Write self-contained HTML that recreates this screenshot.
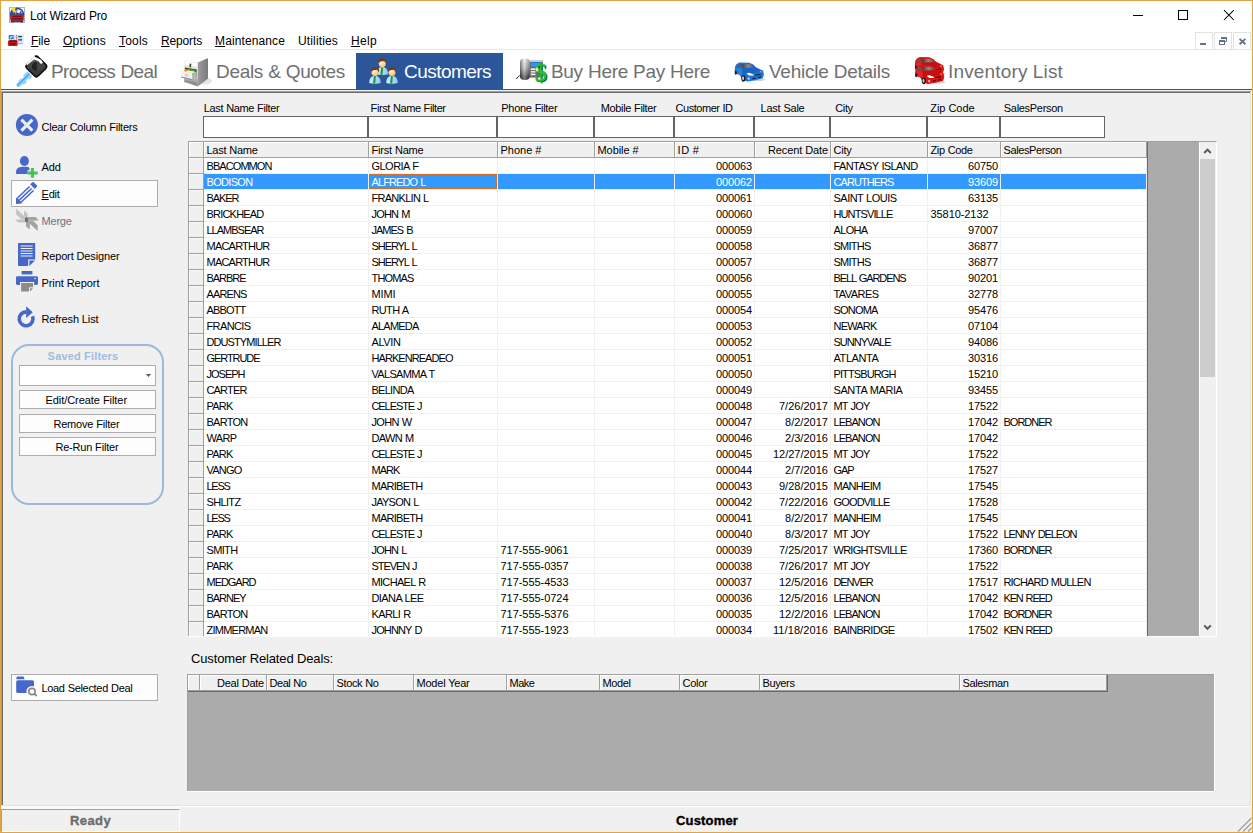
<!DOCTYPE html>
<html><head><meta charset="utf-8"><title>Lot Wizard Pro</title>
<style>
*{box-sizing:border-box;margin:0;padding:0}
html,body{width:1253px;height:833px;overflow:hidden;background:#fff}
body{font-family:"Liberation Sans",sans-serif;font-size:11px;color:#000;position:relative}
#win{position:absolute;left:0;top:0;width:1253px;height:833px;background:#fff;overflow:hidden}
#win *{position:absolute}
#win .t{white-space:nowrap;line-height:1}
#win .t u{position:static;text-decoration:underline}
#client{left:1px;top:90px;width:1251px;height:715px;background:#f0f0f0}
.inp{top:116px;height:22px;background:#fff;border:1px solid #646464}
.btn{background:#fdfdfd;border:1px solid #adadad}
#grid{left:188px;top:141px;width:1029px;height:496px;background:#ababab;border-top:1px solid #a0a0a0;border-left:1px solid #a0a0a0;border-right:1px solid #fff;border-bottom:1px solid #fff}
.hdr{top:142px;height:16px;background:#f0f0f0;border-right:1px solid #a0a0a0;border-bottom:1px solid #a0a0a0;box-shadow:inset 1px 1px 0 #fff;font-size:11px;line-height:14px;padding-top:1px;padding-left:2.5px;white-space:nowrap;overflow:hidden}
.row{left:189px;width:958px;height:16px;background:#fff}
.row .rh{left:0;top:0;width:15px;height:16px;background:#f0f0f0;border-right:1px solid #a0a0a0;border-bottom:1px solid #a0a0a0;box-shadow:inset 1px 1px 0 #fafafa}
.row .c{top:0;height:16px;line-height:16px;font-size:11px;white-space:nowrap;overflow:hidden;border-right:1px solid #f0f0f0;border-bottom:1px solid #f0f0f0;padding:0 2px 0 2.5px}
.row .r{text-align:right}
.row.sel .c{background:#3399ff;color:#fff}
</style></head><body><div id="win">
<!-- title bar -->
<div class="t" style="left:30px;top:10px;font-size:12px;letter-spacing:-0.186px;word-spacing:0.125px;">Lot Wizard Pro</div>
<svg style="left:1128px;top:6px" width="120" height="20" viewBox="0 0 120 20">
<path d="M5 9.5 H15" stroke="#000" stroke-width="1" fill="none"/>
<rect x="50.5" y="4.5" width="9" height="9" stroke="#000" stroke-width="1" fill="none"/>
<path d="M96 4.2 L105.8 14 M105.8 4.2 L96 14" stroke="#000" stroke-width="1.05" fill="none"/>
</svg>
<!-- menu -->
<div class="t" style="left:31px;top:35px;font-size:12px;letter-spacing:-0.084px;"><u>F</u>ile</div>
<div class="t" style="left:63px;top:35px;font-size:12px;letter-spacing:0.235px;"><u>O</u>ptions</div>
<div class="t" style="left:119px;top:35px;font-size:12px;letter-spacing:0.198px;"><u>T</u>ools</div>
<div class="t" style="left:161px;top:35px;font-size:12px;letter-spacing:-0.145px;"><u>R</u>eports</div>
<div class="t" style="left:215px;top:35px;font-size:12px;letter-spacing:0.117px;"><u>M</u>aintenance</div>
<div class="t" style="left:298px;top:35px;font-size:12px;letter-spacing:0.148px;">Utilities</div>
<div class="t" style="left:351px;top:35px;font-size:12px;letter-spacing:0.33px;"><u>H</u>elp</div>
<div style="left:1px;top:49px;width:1251px;height:1px;background:#e8e8e8"></div>
<!-- tabs -->
<div style="left:356px;top:53px;width:147px;height:36px;background:#2b579a"></div>
<div style="left:1px;top:89px;width:1251px;height:1px;background:#2b579a"></div>
<div class="t" style="left:51px;top:62px;font-size:19px;letter-spacing:-0.627px;word-spacing:0.53px;color:#707070;">Process Deal</div>
<div class="t" style="left:216px;top:62px;font-size:19px;letter-spacing:-0.323px;word-spacing:0.226px;color:#707070;">Deals &amp; Quotes</div>
<div class="t" style="left:404px;top:62px;font-size:19px;letter-spacing:-0.539px;color:#fff;">Customers</div>
<div class="t" style="left:551px;top:62px;font-size:19px;letter-spacing:-0.314px;word-spacing:0.217px;color:#707070;">Buy Here Pay Here</div>
<div class="t" style="left:769px;top:62px;font-size:19px;letter-spacing:-0.252px;word-spacing:0.156px;color:#707070;">Vehicle Details</div>
<div class="t" style="left:948px;top:62px;font-size:19px;letter-spacing:0.161px;word-spacing:-0.258px;color:#707070;">Inventory List</div>
<!-- client -->
<div id="client"></div>
<div style="left:1px;top:91px;width:1251px;height:1px;background:#a0a0a0"></div>
<div style="left:2px;top:92px;width:1250px;height:1px;background:#696969"></div>
<div style="left:1px;top:91px;width:1px;height:714px;background:#a0a0a0"></div>
<div style="left:2px;top:92px;width:1px;height:713px;background:#696969"></div>
<!-- left panel -->
<div class="btn" style="left:11px;top:180px;width:147px;height:27px"></div>
<div class="btn" style="left:11px;top:674px;width:147px;height:27px"></div>
<div class="t" style="left:41.5px;top:122px;font-size:11px;letter-spacing:-0.229px;word-spacing:0.173px;">Clear Column Filters</div>
<div class="t" style="left:41.6px;top:162px;font-size:11px;letter-spacing:-0.191px;">Add</div>
<div class="t" style="left:41.6px;top:189px;font-size:11px;letter-spacing:-0.239px;"><u>E</u>dit</div>
<div class="t" style="left:41.6px;top:216px;font-size:11px;letter-spacing:-0.235px;color:#6f6f80;">Merge</div>
<div class="t" style="left:41.4px;top:251px;font-size:11px;letter-spacing:-0.145px;word-spacing:0.089px;">Report Designer</div>
<div class="t" style="left:41.4px;top:278px;font-size:11px;letter-spacing:-0.057px;word-spacing:0.001px;">Print Report</div>
<div class="t" style="left:41.4px;top:314px;font-size:11px;letter-spacing:-0.148px;word-spacing:0.092px;">Refresh List</div>
<div class="t" style="left:41.4px;top:683px;font-size:11px;letter-spacing:-0.306px;word-spacing:0.25px;">Load Selected Deal</div>
<div style="left:11px;top:344px;width:153px;height:161px;border:2px solid #9cb8dc;border-radius:18px"></div>
<div class="t" style="left:47.6px;top:351px;font-size:11px;letter-spacing:0.199px;word-spacing:-0.255px;font-weight:bold;color:#a0bbdf;">Saved Filters</div>
<div class="btn" style="left:19px;top:365px;width:137px;height:21px;background:#fff"></div>
<svg style="left:144px;top:372px" width="9" height="6" viewBox="0 0 9 6"><path d="M1.8 2 H7.2 L4.5 5 Z" fill="#606060"/></svg>
<div class="btn" style="left:19px;top:390px;width:137px;height:19px"></div>
<div class="btn" style="left:19px;top:414px;width:137px;height:19px"></div>
<div class="btn" style="left:19px;top:437px;width:137px;height:19px"></div>
<div class="t" style="left:45.5px;top:395px;font-size:11px;letter-spacing:-0.057px;word-spacing:0.001px;">Edit/Create Filter</div>
<div class="t" style="left:53.4px;top:419px;font-size:11px;letter-spacing:-0.2px;word-spacing:0.144px;">Remove Filter</div>
<div class="t" style="left:55.4px;top:442px;font-size:11px;letter-spacing:-0.195px;word-spacing:0.139px;">Re-Run Filter</div>
<!-- app icon -->
<svg style="left:9px;top:7px" width="16" height="16" viewBox="0 0 16 16">
<rect x=".5" y=".5" width="15" height="15" fill="#fff" stroke="#b0b0b0" stroke-width="1"/>
<circle cx="8" cy="7.6" r="7.2" fill="#2c47ae"/>
<path d="M1.4 9 Q4 4.6 6 6 L4.6 10 Z" fill="#1c7a58" opacity=".7"/>
<path d="M2.2 .6 L6.8 .4 L5.8 3.6 L8 3.4 L6.6 8 L6.4 5.2 L4.2 5.6 Z" fill="#f6e21a"/>
<path d="M8.4 2 L12 3.2 L10.4 6.6 L8 5.4 Z" fill="#eef0fa"/>
<path d="M12 3.4 L13.8 5.4 L12 7 Z" fill="#8a96d8"/>
<path d="M1.2 10 Q2 7.6 4 7.8 L12 7.8 Q14 7.6 14.8 10 L14.8 13.6 L1.2 13.6 Z" fill="#d41a1a"/>
<path d="M3.4 8.8 H12.6 V10 H3.4 Z" fill="#7a1010"/>
<path d="M2.4 11.4 H13.6 V12.4 H2.4 Z" fill="#5a0c0c"/>
<rect x="1.8" y="13.4" width="3" height="1.8" fill="#222"/><rect x="11.2" y="13.4" width="3" height="1.8" fill="#222"/>
<path d="M4 14 H12 V15 H4 Z" fill="#b01414"/>
</svg>
<!-- menu icon -->
<svg style="left:8px;top:34px" width="16" height="13" viewBox="0 0 16 13">
<rect x=".4" y=".7" width="15.2" height="10" fill="#cfe4fa"/>
<rect x=".8" y="1" width="4.8" height="4.2" fill="#2a78e4"/>
<path d="M2 4.4 L2.6 2.4 L4.6 2 L4.6 3 L3.4 3.2 L3 4.6 Z" fill="#fff"/>
<rect x="8" y="1.2" width="1" height="1" fill="#e02020"/><rect x="8" y="3" width="1" height="1.4" fill="#e05050"/><rect x="8" y="5.6" width="1" height="1" fill="#e02020"/>
<path d="M10.2 2 h3.6 v1.2 h-3.6 z M10.2 5.2 h3.8 v1.4 h-3.8 z" fill="#333"/>
<path d="M10.2 9.2 h3.6 v.8 h-3.6 z" fill="#8aa"/>
<path d="M0 7 L1.6 6.2 H8.2 L9.6 7 V11 Q9.6 12 8.6 12 H1 Q0 12 0 11 Z" fill="#e01414"/>
<path d="M1.6 6.4 H8.4 L9 7.6 H1 Z" fill="#111"/>
<rect x="1.8" y="9.2" width="6" height="1.2" fill="#111"/>
</svg>
<!-- mdi child buttons -->
<div style="left:1195px;top:32px;width:18px;height:18px;border:1px solid #e2e2e2;background:#fff"></div>
<div style="left:1214px;top:32px;width:18px;height:18px;border:1px solid #e2e2e2;background:#fff"></div>
<div style="left:1233px;top:32px;width:18px;height:18px;border:1px solid #e2e2e2;background:#fff"></div>
<svg style="left:1195px;top:32px" width="57" height="18" viewBox="0 0 57 18">
<rect x="5" y="11" width="6" height="2" fill="#62738c"/>
<path d="M26.5 6 h5 v3.5 h-2" stroke="#62738c" stroke-width="1" fill="none"/>
<rect x="26" y="5" width="6" height="2" fill="#62738c"/>
<rect x="24.5" y="8.5" width="5" height="4" stroke="#62738c" stroke-width="1" fill="#fff"/>
<rect x="24" y="8" width="6" height="2" fill="#62738c"/>
<path d="M44.6 6.9 L50.4 12.3 M50.4 6.9 L44.6 12.3" stroke="#62738c" stroke-width="1.9" fill="none"/>
</svg>
<svg width="0" height="0" style="left:0;top:0"><defs>
<linearGradient id="kh" x1="0" y1="0" x2="1" y2="1"><stop offset="0" stop-color="#585858"/><stop offset="1" stop-color="#303030"/></linearGradient>
<linearGradient id="hs" x1="0" y1="0" x2="0" y2="1"><stop offset="0" stop-color="#f4f4f4"/><stop offset="0.45" stop-color="#b8b8b8"/><stop offset="1" stop-color="#1c1c1c"/></linearGradient>
<linearGradient id="hs2" x1="0" y1="0" x2="1" y2="0"><stop offset="0" stop-color="#000" stop-opacity=".45"/><stop offset="0.45" stop-color="#fff" stop-opacity=".35"/><stop offset="1" stop-color="#000" stop-opacity=".35"/></linearGradient>
<linearGradient id="cwin" x1="0" y1="0" x2="1" y2="0"><stop offset="0" stop-color="#3a3a3a"/><stop offset="0.5" stop-color="#8a8a8a"/><stop offset="1" stop-color="#4a4a4a"/></linearGradient>
<linearGradient id="cab" x1="0" y1="0" x2="0" y2="1"><stop offset="0" stop-color="#fafafa"/><stop offset="0.55" stop-color="#d0d0d0"/><stop offset="1" stop-color="#8a8a8a"/></linearGradient>
<linearGradient id="cabs" x1="0" y1="0" x2="1" y2="0"><stop offset="0" stop-color="#9c9c9c"/><stop offset="1" stop-color="#7a7a7a"/></linearGradient>
<radialGradient id="skin" cx=".4" cy=".4" r=".7"><stop offset="0" stop-color="#fff0dc"/><stop offset="1" stop-color="#f8b868"/></radialGradient>
<linearGradient id="shirt" x1="0" y1="0" x2="1" y2="0"><stop offset="0" stop-color="#d4eeff"/><stop offset="1" stop-color="#8cc8f8"/></linearGradient>
<g id="person">
<path d="M-5.7 11.2 C-5.9 6 -3 4 0 4 C3 4 5.9 6 5.7 11.2 C3 12.3 -3 12.3 -5.7 11.2 Z" fill="url(#shirt)"/>
<path d="M-1 4.2 L0.9 4.2 L0.2 11.9 L-2 11.8 Z" fill="#1f9a2f"/>
<ellipse cx="0" cy="0.3" rx="3.6" ry="4.1" fill="url(#skin)"/>
<path d="M-3.9 0.6 C-4.7 -4 -1.4 -5 0.6 -4.7 C3.4 -4.7 4.8 -2.4 3.9 1 C3.1 -0.6 2.7 -1.7 1.4 -1.9 C-0.4 -1.4 -2.7 -1.9 -3.9 0.6 Z" fill="#7a3a10"/>
</g>
<g id="car">
<ellipse cx="33" cy="29.6" rx="7" ry="1.6" fill="#cfcfcf"/>
<path d="M10.1 16.5 L11.6 14 L14.6 12.5 L24.2 12.7 L28.4 14.6 L30.6 17 L35.4 19.5 L38 20.6 L38.9 24.6 L37.8 28.2 L30.2 30.3 L22.7 31.4 L20.6 31 L16.3 27.4 L15 25.3 L10.8 23.6 L9.6 21.2 Z" fill="currentColor"/>
<path d="M17.4 18.2 L30.4 17.6 L35.4 19.6 L37.6 21.2 L30 23 L22 23.6 L18 24 Z" fill="#000" opacity=".12"/>
<path d="M16.4 14.3 L25.8 14.3 L30.3 17.5 L17.4 18 Z" fill="url(#cwin)"/>
<path d="M12.8 14.7 L15.5 14.3 L16.2 17.7 L11.8 17.4 Z" fill="#5a5a5a"/>
<path d="M11.2 17.8 L16.4 18.3 L17.2 26 L15.6 25 L11 23.2 Z" fill="#fff" opacity=".08"/>
<ellipse cx="18.4" cy="28.3" rx="2.1" ry="3.4" fill="#1a1a1a"/>
<ellipse cx="18.1" cy="28.3" rx="1" ry="2" fill="#c8c8c8"/>
<ellipse cx="10.8" cy="22.8" rx="1.1" ry="2" fill="#1a1a1a"/>
<path d="M21.4 23.2 L24 22.8 L28.6 24.6 L28.4 25.6 L24 25.4 Z" fill="#fff"/>
<path d="M30 24.6 L35.6 23.8 L35.8 24.8 L30.4 25.6 Z" fill="#111"/>
<path d="M27.4 28.2 L30.6 27.6 L30.8 28.6 L27.6 29.2 Z M33 27 L35.8 26.2 L35.8 27.4 L33.2 28 Z" fill="#111"/>
<path d="M22.6 27.8 L24.6 27.4 L24.8 29.4 L23 29.8 Z" fill="#fff" opacity=".75"/>
<path d="M34.4 20.4 L36.6 21.2 L36 23 Z" fill="#fff" opacity=".55"/>
</g>
</defs></svg>
<!-- Process Deal: key -->
<svg style="left:10px;top:50px" width="50" height="42" viewBox="0 0 50 42">
<path d="M17.5 21.2 L22.5 26.2 L19.6 29.3 L18.2 28.6 L16 31 L16.8 32.6 L13.4 34.8 L12.4 33.8 L10.6 36.2 L7.6 37 L6.2 35.6 L6.6 33.4 L9 31.6 L8.6 30.4 L11.4 28.2 L12.2 28.8 L14 26.8 L13.2 25.4 Z" fill="#8ed2ff"/>
<path d="M7.4 35.6 L19.4 23.6" stroke="#3a9cf4" stroke-width="1.1" fill="none"/>
<rect x="-8.1" y="-8.1" width="16.2" height="16.2" rx="3" transform="translate(26.3 16.5) rotate(45)" fill="url(#kh)" stroke="#0c0c0c" stroke-width="1.5"/>
<path d="M24 6.6 L31 9.8 L33 12.8 L30.6 14.2 L28.6 11.2 L24.2 9.4 L20.6 12.2 L17.4 15 L16.2 14.2 Z" fill="#fff"/>
<path d="M15.4 15.2 L24.4 6.2" stroke="#fff" stroke-width="1.2" stroke-dasharray="1 1" fill="none"/>
<circle cx="26.3" cy="16.4" r="4.4" fill="#222"/>
<path d="M26.8 12 A4.4 4.4 0 0 1 26.8 20.8" fill="#454545"/>
<path d="M15.6 19 L23.8 27" stroke="#fff" stroke-width="1.2" stroke-dasharray="1 1.2" fill="none"/>
</svg>
<!-- Deals & Quotes: cabinet -->
<svg style="left:172px;top:50px" width="50" height="42" viewBox="0 0 50 42">
<ellipse cx="32" cy="31" rx="8" ry="3.5" fill="#d8d8d8" opacity=".7"/>
<path d="M25.8 12.2 L36 8 L36 28.4 L25.8 36.4 Z" fill="url(#cabs)"/>
<path d="M12 9.2 L25.8 12.2 L25.8 36.4 L12 32 Z" fill="url(#cab)"/>
<path d="M12 9.2 L22 5.6 L36 8 L25.8 12.2 Z" fill="#fdfdfd"/>
<path d="M13 11 L24.6 13.6 L24.6 17 L13 14.6 Z" fill="#fff"/>
<path d="M17.6 13.4 L19.4 13.8 L19 17.4 L17.4 17 Z" fill="#444"/>
<path d="M13 17.4 L24.6 19.6 L24.6 26 L20 25 L13 19 Z" fill="#3a3a3a"/>
<path d="M12.2 20.2 C14 18.6 16 19.4 18 20.4 C20 21.4 22.4 20 24.4 22.6 L22.4 24 L12.2 21.6 Z" fill="#ff8a10"/>
<path d="M14 19.4 C16 18 18.4 19.6 20.4 19.6 C22.4 19.6 23.6 20.6 24.2 23.2 L22.6 23.6 C22 21.6 20 21 18 20.8 Z" fill="#30c020"/>
<path d="M15.4 20.6 L22 21.4 L23.4 23.6 L14.6 22 Z" fill="#fff4e0"/>
<path d="M9 20.6 L20.4 23 L20.4 29.2 L9 26.4 Z" fill="#f2f2f2"/>
<path d="M9 26.4 L20.4 29.2 L20.4 30.2 L9 27.4 Z" fill="#8a8a8a"/>
<path d="M20.4 23 L24.6 21.6 L24.6 28 L20.4 29.2 Z" fill="#b4b4b4"/>
<circle cx="14.6" cy="25.2" r="1.2" fill="#fff" stroke="#888" stroke-width=".5"/>
<path d="M13 30 L24.6 32.8 L24.6 34.6 L13 31.4 Z" fill="#787878" opacity=".6"/>
</svg>
<!-- Customers -->
<svg style="left:360px;top:50px" width="50" height="42" viewBox="0 0 50 42">
<use href="#person" x="22.3" y="13"/>
<use href="#person" x="15" y="21.7"/>
<use href="#person" x="32" y="21.7"/>
</svg>
<!-- Buy Here Pay Here: phone + $ -->
<svg style="left:508px;top:50px" width="50" height="42" viewBox="0 0 50 42">
<path d="M8.2 29 L11.6 25.4" stroke="#222" stroke-width="1" fill="none"/>
<rect x="21.4" y="10.4" width="13.4" height="17.2" fill="#6c6c6c"/>
<rect x="21.4" y="10.4" width="13.4" height="1.4" fill="#e4e0dc"/>
<rect x="22.8" y="12" width="10.2" height="4.4" fill="#2c96ff"/>
<rect x="22.8" y="12" width="10.2" height="1" fill="#1878e0"/>
<rect x="22.8" y="18.4" width="4.6" height="1.6" fill="#fafafa"/><rect x="22.8" y="21" width="4.6" height="1.6" fill="#e8e8e8"/><rect x="22.8" y="23.6" width="4.6" height="1.6" fill="#fafafa"/>
<rect x="12" y="8.6" width="9.8" height="21.2" rx="4" fill="url(#hs)"/>
<rect x="12" y="8.6" width="9.8" height="21.2" rx="4" fill="url(#hs2)"/>
<g font-family="Liberation Serif" font-weight="bold" font-size="25" >
<text x="27.6" y="31.6" fill="#0a6a12">$</text>
<text x="26.4" y="31" fill="#28c030">$</text>
</g>
<ellipse cx="29" cy="19.4" rx="1.4" ry="2" fill="#e8ffe8" opacity=".8"/>
</svg>
<!-- Vehicle Details -->
<svg style="left:725px;top:50px;color:#1b72dc" width="50" height="42" viewBox="0 0 50 42"><use href="#car"/></svg>
<!-- Inventory List -->
<svg style="left:905px;top:50px;color:#dc1414" width="50" height="42" viewBox="0 0 50 42"><use href="#car" x="0.2" y="-5.4"/><use href="#car" x="0.4" y="2.5"/></svg>
<!-- Clear filters -->
<svg style="left:14px;top:112px" width="26" height="26" viewBox="0 0 26 26">
<circle cx="12.9" cy="12.9" r="11" fill="#4668c8"/>
<path d="M7.4 7.6 L18.4 18.6 M18.4 7.6 L7.4 18.6" stroke="#f0f0f0" stroke-width="3" fill="none"/>
</svg>
<!-- Add -->
<svg style="left:14px;top:154px" width="26" height="26" viewBox="0 0 26 26">
<ellipse cx="10.4" cy="7" rx="4.5" ry="5.1" fill="#4668c8"/>
<path d="M2.1 20 V17.4 C2.1 14.6 5 13 8 12.8 H12.8 C14.6 13 15.6 13.6 15.6 15 V20 Z" fill="#4668c8"/>
<path d="M13.5 18.9 H23.7 M18.4 14 V23.8" stroke="#f0f0f0" stroke-width="5.4" fill="none"/>
<path d="M13.5 18.9 H23.7 M18.4 14 V23.8" stroke="#3fc455" stroke-width="3" fill="none"/>
</svg>
<!-- Edit pencil -->
<svg style="left:10px;top:180px" width="34" height="28" viewBox="0 0 34 28">
<path d="M6.7 18.7 L19.6 6.5 M8.7 20.6 L21.6 8.5 M10.7 22.5 L23.5 10.5" stroke="#4668c8" stroke-width="1.55" fill="none"/>
<path d="M6 18 L6 23.9 L11.8 23.5 L11.2 22 L7.4 18.2 Z" fill="#4668c8"/>
<path d="M20.2 4.3 L22.4 2.2 Q23 1.7 23.6 2.3 L26.8 5.3 Q27.5 6 26.9 6.7 L24.8 8.9 Z" fill="#4668c8"/>
</svg>
<!-- Merge -->
<svg style="left:10px;top:205px" width="34" height="30" viewBox="0 0 34 30">
<g fill="#c3c3c3">
<path d="M6.1 3.6 L6.1 9.4 L11.9 14.4 L15.1 14.4 L15.1 11.9 Z"/>
<path d="M14 5.4 L17.6 8.6 L17.6 11.9 L15.1 11.9 L14 10.8 Z"/>
<path d="M5 14.4 L8.3 17.6 L15.1 17.6 L15.1 14.4 Z"/>
</g>
<g fill="#a3a3a3">
<path d="M18 11.9 L25.6 11.9 L28.8 15.5 L18 15.5 Z"/>
<path d="M15.9 15.5 L15.9 21.3 L19.8 24.5 L19.8 15.5 Z"/>
<path d="M19.8 15.5 L23 15.5 L27.7 20.2 L27.7 25.9 L19.8 18.7 Z"/>
</g>
<rect x="15" y="12.2" width="2.9" height="4.7" rx=".8" fill="#6c6c6c"/>
</svg>
<!-- Report designer -->
<svg style="left:16px;top:242px" width="22" height="26" viewBox="0 0 22 26">
<path d="M2.6 1.1 H18.6 Q19.2 1.1 19.2 1.7 V17.4 H12.2 V24 H2.6 Q2 24 2 23.4 V1.7 Q2 1.1 2.6 1.1 Z" fill="#4668c8"/>
<path d="M13.4 18.6 H19 L13.4 24 Z" fill="#4668c8"/>
<path d="M4.6 4 H16.6 M4.6 6.5 H16.6 M4.6 9 H16.6 M4.6 11.5 H16.6 M4.6 14 H16.6" stroke="#f0f0f0" stroke-width="1.2" fill="none"/>
</svg>
<!-- Print -->
<svg style="left:14px;top:270px" width="26" height="24" viewBox="0 0 26 24">
<rect x="7.6" y="1" width="10.8" height="3.4" fill="#4668c8"/>
<rect x="2" y="6.2" width="22" height="8.8" rx="1.4" fill="#4668c8"/>
<rect x="6" y="12" width="14.2" height="4" fill="#f0f0f0"/>
<path d="M7.1 13 H19.1 V17.2 H15 V21.6 H7.1 Z" fill="#8c8c8c"/>
<path d="M16 18.2 H19.1 L16 21.6 Z" fill="#8c8c8c"/>
<rect x="20.4" y="7.8" width="1.4" height="1.4" fill="#f0f0f0"/>
</svg>
<!-- Refresh -->
<svg style="left:14px;top:304px" width="26" height="26" viewBox="0 0 26 26">
<path d="M12.1 7.9 A6.9 6.9 0 1 0 18.5 12.2" stroke="#4668c8" stroke-width="3.6" fill="none"/>
<path d="M12.1 2.3 L18.8 8.2 L12.1 14 Z" fill="#4668c8"/>
</svg>
<!-- Load selected deal -->
<svg style="left:14px;top:675px" width="26" height="24" viewBox="0 0 26 24">
<path d="M2.2 4.3 L2.8 1.8 Q3 1.4 3.6 1.4 H9 Q9.6 1.4 9.8 1.8 L10.6 4.3 Z" fill="#4668c8"/>
<rect x="2.2" y="5.2" width="17.8" height="12.8" rx="1.6" fill="#4668c8"/>
<circle cx="18" cy="16.5" r="5.6" fill="#fdfdfd"/>
<circle cx="18" cy="16.5" r="3.2" fill="#fdfdfd" stroke="#8a8a8a" stroke-width="1.7"/>
<path d="M20.4 18.9 L22.8 21" stroke="#8a8a8a" stroke-width="1.9" fill="none"/>
</svg>

<!-- filters -->
<div class="t" style="left:203.8px;top:103px;font-size:11px;letter-spacing:-0.362px;word-spacing:0.306px;">Last Name Filter</div><div class="t" style="left:370.6px;top:103px;font-size:11px;letter-spacing:-0.411px;word-spacing:0.355px;">First Name Filter</div><div class="t" style="left:501.3px;top:103px;font-size:11px;letter-spacing:-0.295px;word-spacing:0.239px;">Phone Filter</div><div class="t" style="left:600.8px;top:103px;font-size:11px;letter-spacing:-0.362px;word-spacing:0.306px;">Mobile Filter</div><div class="t" style="left:675.6px;top:103px;font-size:11px;letter-spacing:-0.468px;word-spacing:0.411px;">Customer ID</div><div class="t" style="left:760.5px;top:103px;font-size:11px;letter-spacing:-0.226px;word-spacing:0.17px;">Last Sale</div><div class="t" style="left:835.2px;top:103px;font-size:11px;letter-spacing:-0.336px;">City</div><div class="t" style="left:930.2px;top:103px;font-size:11px;letter-spacing:-0.011px;word-spacing:-0.046px;">Zip Code</div><div class="t" style="left:1003.8px;top:103px;font-size:11px;letter-spacing:-0.306px;">SalesPerson</div>
<div class="inp" style="left:203px;width:165px"></div><div class="inp" style="left:368px;width:129px"></div><div class="inp" style="left:497px;width:97px"></div><div class="inp" style="left:594px;width:80px"></div><div class="inp" style="left:674px;width:80px"></div><div class="inp" style="left:754px;width:76px"></div><div class="inp" style="left:830px;width:97px"></div><div class="inp" style="left:927px;width:73px"></div><div class="inp" style="left:1000px;width:105px"></div>
<!-- grid -->
<div id="grid"></div>
<div class="hdr" style="left:189px;width:15px"></div><div class="hdr" style="left:204px;width:165px;letter-spacing:-0.266px;word-spacing:0.21px;">Last Name</div><div class="hdr" style="left:369px;width:129px;letter-spacing:-0.191px;word-spacing:0.135px;">First Name</div><div class="hdr" style="left:498px;width:97px;letter-spacing:0.013px;word-spacing:-0.069px;">Phone #</div><div class="hdr" style="left:595px;width:80px;letter-spacing:-0.074px;word-spacing:0.018px;">Mobile #</div><div class="hdr" style="left:675px;width:80px;letter-spacing:0.628px;word-spacing:-0.684px;">ID #</div><div class="hdr" style="left:755px;width:76px;letter-spacing:-0.109px;word-spacing:0.052px;text-align:right;padding-right:2px;">Recent Date</div><div class="hdr" style="left:831px;width:97px;letter-spacing:-0.236px;word-spacing:0px;">City</div><div class="hdr" style="left:928px;width:73px;letter-spacing:-0.368px;word-spacing:0.312px;">Zip Code</div><div class="hdr" style="left:1001px;width:146px;letter-spacing:-0.397px;word-spacing:0px;">SalesPerson</div>
<div style="left:1147px;top:142px;width:1px;height:494px;background:#696969"></div>
<div class="row" style="top:158px"><i class="rh"></i><span class="c" style="left:15px;width:165px;letter-spacing:-0.926px;">BBACOMMON</span><span class="c" style="left:180px;width:129px;letter-spacing:-0.526px;word-spacing:0.469px;">GLORIA F</span><span class="c" style="left:309px;width:97px;"></span><span class="c" style="left:406px;width:80px;"></span><span class="c r" style="left:486px;width:80px;letter-spacing:-0.117px;">000063</span><span class="c r" style="left:566px;width:76px;"></span><span class="c" style="left:642px;width:97px;letter-spacing:-0.604px;word-spacing:0.547px;">FANTASY ISLAND</span><span class="c r" style="left:739px;width:73px;letter-spacing:-0.117px;">60750</span><span class="c" style="left:812px;width:146px;"></span></div>
<div class="row sel" style="top:174px"><i class="rh"></i><span class="c" style="left:15px;width:165px;letter-spacing:-0.676px;">BODISON</span><span class="c" style="left:180px;width:129px;letter-spacing:-0.884px;word-spacing:0.828px;">ALFREDO L</span><span class="c" style="left:309px;width:97px;"></span><span class="c" style="left:406px;width:80px;"></span><span class="c r" style="left:486px;width:80px;letter-spacing:-0.117px;">000062</span><span class="c r" style="left:566px;width:76px;"></span><span class="c" style="left:642px;width:97px;letter-spacing:-0.939px;">CARUTHERS</span><span class="c r" style="left:739px;width:73px;letter-spacing:-0.117px;">93609</span><span class="c" style="left:812px;width:146px;"></span></div>
<div class="row" style="top:190px"><i class="rh"></i><span class="c" style="left:15px;width:165px;letter-spacing:-1.059px;">BAKER</span><span class="c" style="left:180px;width:129px;letter-spacing:-0.724px;word-spacing:0.668px;">FRANKLIN L</span><span class="c" style="left:309px;width:97px;"></span><span class="c" style="left:406px;width:80px;"></span><span class="c r" style="left:486px;width:80px;letter-spacing:-0.117px;">000061</span><span class="c r" style="left:566px;width:76px;"></span><span class="c" style="left:642px;width:97px;letter-spacing:-0.521px;word-spacing:0.464px;">SAINT LOUIS</span><span class="c r" style="left:739px;width:73px;letter-spacing:-0.117px;">63135</span><span class="c" style="left:812px;width:146px;"></span></div>
<div class="row" style="top:206px"><i class="rh"></i><span class="c" style="left:15px;width:165px;letter-spacing:-0.798px;">BRICKHEAD</span><span class="c" style="left:180px;width:129px;letter-spacing:-0.821px;word-spacing:0.765px;">JOHN M</span><span class="c" style="left:309px;width:97px;"></span><span class="c" style="left:406px;width:80px;"></span><span class="c r" style="left:486px;width:80px;letter-spacing:-0.117px;">000060</span><span class="c r" style="left:566px;width:76px;"></span><span class="c" style="left:642px;width:97px;letter-spacing:-0.885px;">HUNTSVILLE</span><span class="c" style="left:739px;width:73px;letter-spacing:-0.072px;">35810-2132</span><span class="c" style="left:812px;width:146px;"></span></div>
<div class="row" style="top:222px"><i class="rh"></i><span class="c" style="left:15px;width:165px;letter-spacing:-1.003px;">LLAMBSEAR</span><span class="c" style="left:180px;width:129px;letter-spacing:-1.002px;word-spacing:0.946px;">JAMES B</span><span class="c" style="left:309px;width:97px;"></span><span class="c" style="left:406px;width:80px;"></span><span class="c r" style="left:486px;width:80px;letter-spacing:-0.117px;">000059</span><span class="c r" style="left:566px;width:76px;"></span><span class="c" style="left:642px;width:97px;letter-spacing:-0.658px;">ALOHA</span><span class="c r" style="left:739px;width:73px;letter-spacing:-0.117px;">97007</span><span class="c" style="left:812px;width:146px;"></span></div>
<div class="row" style="top:238px"><i class="rh"></i><span class="c" style="left:15px;width:165px;letter-spacing:-0.786px;">MACARTHUR</span><span class="c" style="left:180px;width:129px;letter-spacing:-1.075px;word-spacing:1.019px;">SHERYL L</span><span class="c" style="left:309px;width:97px;"></span><span class="c" style="left:406px;width:80px;"></span><span class="c r" style="left:486px;width:80px;letter-spacing:-0.117px;">000058</span><span class="c r" style="left:566px;width:76px;"></span><span class="c" style="left:642px;width:97px;letter-spacing:-0.759px;">SMITHS</span><span class="c r" style="left:739px;width:73px;letter-spacing:-0.117px;">36877</span><span class="c" style="left:812px;width:146px;"></span></div>
<div class="row" style="top:254px"><i class="rh"></i><span class="c" style="left:15px;width:165px;letter-spacing:-0.786px;">MACARTHUR</span><span class="c" style="left:180px;width:129px;letter-spacing:-1.075px;word-spacing:1.019px;">SHERYL L</span><span class="c" style="left:309px;width:97px;"></span><span class="c" style="left:406px;width:80px;"></span><span class="c r" style="left:486px;width:80px;letter-spacing:-0.117px;">000057</span><span class="c r" style="left:566px;width:76px;"></span><span class="c" style="left:642px;width:97px;letter-spacing:-0.759px;">SMITHS</span><span class="c r" style="left:739px;width:73px;letter-spacing:-0.117px;">36877</span><span class="c" style="left:812px;width:146px;"></span></div>
<div class="row" style="top:270px"><i class="rh"></i><span class="c" style="left:15px;width:165px;letter-spacing:-1.04px;">BARBRE</span><span class="c" style="left:180px;width:129px;letter-spacing:-0.843px;">THOMAS</span><span class="c" style="left:309px;width:97px;"></span><span class="c" style="left:406px;width:80px;"></span><span class="c r" style="left:486px;width:80px;letter-spacing:-0.117px;">000056</span><span class="c r" style="left:566px;width:76px;"></span><span class="c" style="left:642px;width:97px;letter-spacing:-1.082px;word-spacing:1.026px;">BELL GARDENS</span><span class="c r" style="left:739px;width:73px;letter-spacing:-0.117px;">90201</span><span class="c" style="left:812px;width:146px;"></span></div>
<div class="row" style="top:286px"><i class="rh"></i><span class="c" style="left:15px;width:165px;letter-spacing:-0.873px;">AARENS</span><span class="c" style="left:180px;width:129px;letter-spacing:-0.109px;">MIMI</span><span class="c" style="left:309px;width:97px;"></span><span class="c" style="left:406px;width:80px;"></span><span class="c r" style="left:486px;width:80px;letter-spacing:-0.117px;">000055</span><span class="c r" style="left:566px;width:76px;"></span><span class="c" style="left:642px;width:97px;letter-spacing:-0.558px;">TAVARES</span><span class="c r" style="left:739px;width:73px;letter-spacing:-0.117px;">32778</span><span class="c" style="left:812px;width:146px;"></span></div>
<div class="row" style="top:302px"><i class="rh"></i><span class="c" style="left:15px;width:165px;letter-spacing:-0.834px;">ABBOTT</span><span class="c" style="left:180px;width:129px;letter-spacing:-0.656px;word-spacing:0.6px;">RUTH A</span><span class="c" style="left:309px;width:97px;"></span><span class="c" style="left:406px;width:80px;"></span><span class="c r" style="left:486px;width:80px;letter-spacing:-0.117px;">000054</span><span class="c r" style="left:566px;width:76px;"></span><span class="c" style="left:642px;width:97px;letter-spacing:-0.816px;">SONOMA</span><span class="c r" style="left:739px;width:73px;letter-spacing:-0.117px;">95476</span><span class="c" style="left:812px;width:146px;"></span></div>
<div class="row" style="top:318px"><i class="rh"></i><span class="c" style="left:15px;width:165px;letter-spacing:-0.612px;">FRANCIS</span><span class="c" style="left:180px;width:129px;letter-spacing:-0.796px;">ALAMEDA</span><span class="c" style="left:309px;width:97px;"></span><span class="c" style="left:406px;width:80px;"></span><span class="c r" style="left:486px;width:80px;letter-spacing:-0.117px;">000053</span><span class="c r" style="left:566px;width:76px;"></span><span class="c" style="left:642px;width:97px;letter-spacing:-0.812px;">NEWARK</span><span class="c r" style="left:739px;width:73px;letter-spacing:-0.117px;">07104</span><span class="c" style="left:812px;width:146px;"></span></div>
<div class="row" style="top:334px"><i class="rh"></i><span class="c" style="left:15px;width:165px;letter-spacing:-0.913px;">DDUSTYMILLER</span><span class="c" style="left:180px;width:129px;letter-spacing:-0.395px;">ALVIN</span><span class="c" style="left:309px;width:97px;"></span><span class="c" style="left:406px;width:80px;"></span><span class="c r" style="left:486px;width:80px;letter-spacing:-0.117px;">000052</span><span class="c r" style="left:566px;width:76px;"></span><span class="c" style="left:642px;width:97px;letter-spacing:-0.98px;">SUNNYVALE</span><span class="c r" style="left:739px;width:73px;letter-spacing:-0.117px;">94086</span><span class="c" style="left:812px;width:146px;"></span></div>
<div class="row" style="top:350px"><i class="rh"></i><span class="c" style="left:15px;width:165px;letter-spacing:-1.066px;">GERTRUDE</span><span class="c" style="left:180px;width:129px;letter-spacing:-0.942px;">HARKENREADEO</span><span class="c" style="left:309px;width:97px;"></span><span class="c" style="left:406px;width:80px;"></span><span class="c r" style="left:486px;width:80px;letter-spacing:-0.117px;">000051</span><span class="c r" style="left:566px;width:76px;"></span><span class="c" style="left:642px;width:97px;letter-spacing:-0.411px;">ATLANTA</span><span class="c r" style="left:739px;width:73px;letter-spacing:-0.117px;">30316</span><span class="c" style="left:812px;width:146px;"></span></div>
<div class="row" style="top:366px"><i class="rh"></i><span class="c" style="left:15px;width:165px;letter-spacing:-1.002px;">JOSEPH</span><span class="c" style="left:180px;width:129px;letter-spacing:-0.692px;word-spacing:0.636px;">VALSAMMA T</span><span class="c" style="left:309px;width:97px;"></span><span class="c" style="left:406px;width:80px;"></span><span class="c r" style="left:486px;width:80px;letter-spacing:-0.117px;">000050</span><span class="c r" style="left:566px;width:76px;"></span><span class="c" style="left:642px;width:97px;letter-spacing:-0.889px;">PITTSBURGH</span><span class="c r" style="left:739px;width:73px;letter-spacing:-0.117px;">15210</span><span class="c" style="left:812px;width:146px;"></span></div>
<div class="row" style="top:382px"><i class="rh"></i><span class="c" style="left:15px;width:165px;letter-spacing:-0.838px;">CARTER</span><span class="c" style="left:180px;width:129px;letter-spacing:-0.725px;">BELINDA</span><span class="c" style="left:309px;width:97px;"></span><span class="c" style="left:406px;width:80px;"></span><span class="c r" style="left:486px;width:80px;letter-spacing:-0.117px;">000049</span><span class="c r" style="left:566px;width:76px;"></span><span class="c" style="left:642px;width:97px;letter-spacing:-0.409px;word-spacing:0.353px;">SANTA MARIA</span><span class="c r" style="left:739px;width:73px;letter-spacing:-0.117px;">93455</span><span class="c" style="left:812px;width:146px;"></span></div>
<div class="row" style="top:398px"><i class="rh"></i><span class="c" style="left:15px;width:165px;letter-spacing:-0.785px;">PARK</span><span class="c" style="left:180px;width:129px;letter-spacing:-1.079px;word-spacing:1.022px;">CELESTE J</span><span class="c" style="left:309px;width:97px;"></span><span class="c" style="left:406px;width:80px;"></span><span class="c r" style="left:486px;width:80px;letter-spacing:-0.117px;">000048</span><span class="c r" style="left:566px;width:76px;letter-spacing:0.007px;">7/26/2017</span><span class="c" style="left:642px;width:97px;letter-spacing:-0.815px;word-spacing:0.759px;">MT JOY</span><span class="c r" style="left:739px;width:73px;letter-spacing:-0.117px;">17522</span><span class="c" style="left:812px;width:146px;"></span></div>
<div class="row" style="top:414px"><i class="rh"></i><span class="c" style="left:15px;width:165px;letter-spacing:-0.74px;">BARTON</span><span class="c" style="left:180px;width:129px;letter-spacing:-0.665px;word-spacing:0.609px;">JOHN W</span><span class="c" style="left:309px;width:97px;"></span><span class="c" style="left:406px;width:80px;"></span><span class="c r" style="left:486px;width:80px;letter-spacing:-0.117px;">000047</span><span class="c r" style="left:566px;width:76px;letter-spacing:0.023px;">8/2/2017</span><span class="c" style="left:642px;width:97px;letter-spacing:-0.939px;">LEBANON</span><span class="c r" style="left:739px;width:73px;letter-spacing:-0.117px;">17042</span><span class="c" style="left:812px;width:146px;letter-spacing:-1.001px;">BORDNER</span></div>
<div class="row" style="top:430px"><i class="rh"></i><span class="c" style="left:15px;width:165px;letter-spacing:-0.648px;">WARP</span><span class="c" style="left:180px;width:129px;letter-spacing:-0.673px;word-spacing:0.616px;">DAWN M</span><span class="c" style="left:309px;width:97px;"></span><span class="c" style="left:406px;width:80px;"></span><span class="c r" style="left:486px;width:80px;letter-spacing:-0.117px;">000046</span><span class="c r" style="left:566px;width:76px;letter-spacing:0.023px;">2/3/2016</span><span class="c" style="left:642px;width:97px;letter-spacing:-0.939px;">LEBANON</span><span class="c r" style="left:739px;width:73px;letter-spacing:-0.117px;">17042</span><span class="c" style="left:812px;width:146px;"></span></div>
<div class="row" style="top:446px"><i class="rh"></i><span class="c" style="left:15px;width:165px;letter-spacing:-0.785px;">PARK</span><span class="c" style="left:180px;width:129px;letter-spacing:-1.079px;word-spacing:1.022px;">CELESTE J</span><span class="c" style="left:309px;width:97px;"></span><span class="c" style="left:406px;width:80px;"></span><span class="c r" style="left:486px;width:80px;letter-spacing:-0.117px;">000045</span><span class="c r" style="left:566px;width:76px;letter-spacing:-0.005px;">12/27/2015</span><span class="c" style="left:642px;width:97px;letter-spacing:-0.815px;word-spacing:0.759px;">MT JOY</span><span class="c r" style="left:739px;width:73px;letter-spacing:-0.117px;">17522</span><span class="c" style="left:812px;width:146px;"></span></div>
<div class="row" style="top:462px"><i class="rh"></i><span class="c" style="left:15px;width:165px;letter-spacing:-0.783px;">VANGO</span><span class="c" style="left:180px;width:129px;letter-spacing:-0.945px;">MARK</span><span class="c" style="left:309px;width:97px;"></span><span class="c" style="left:406px;width:80px;"></span><span class="c r" style="left:486px;width:80px;letter-spacing:-0.117px;">000044</span><span class="c r" style="left:566px;width:76px;letter-spacing:0.023px;">2/7/2016</span><span class="c" style="left:642px;width:97px;letter-spacing:-1.077px;">GAP</span><span class="c r" style="left:739px;width:73px;letter-spacing:-0.117px;">17527</span><span class="c" style="left:812px;width:146px;"></span></div>
<div class="row" style="top:478px"><i class="rh"></i><span class="c" style="left:15px;width:165px;letter-spacing:-1.282px;">LESS</span><span class="c" style="left:180px;width:129px;letter-spacing:-0.73px;">MARIBETH</span><span class="c" style="left:309px;width:97px;"></span><span class="c" style="left:406px;width:80px;"></span><span class="c r" style="left:486px;width:80px;letter-spacing:-0.117px;">000043</span><span class="c r" style="left:566px;width:76px;letter-spacing:0.007px;">9/28/2015</span><span class="c" style="left:642px;width:97px;letter-spacing:-0.706px;">MANHEIM</span><span class="c r" style="left:739px;width:73px;letter-spacing:-0.117px;">17545</span><span class="c" style="left:812px;width:146px;"></span></div>
<div class="row" style="top:494px"><i class="rh"></i><span class="c" style="left:15px;width:165px;letter-spacing:-0.649px;">SHLITZ</span><span class="c" style="left:180px;width:129px;letter-spacing:-0.759px;word-spacing:0.703px;">JAYSON L</span><span class="c" style="left:309px;width:97px;"></span><span class="c" style="left:406px;width:80px;"></span><span class="c r" style="left:486px;width:80px;letter-spacing:-0.117px;">000042</span><span class="c r" style="left:566px;width:76px;letter-spacing:0.007px;">7/22/2016</span><span class="c" style="left:642px;width:97px;letter-spacing:-0.842px;">GOODVILLE</span><span class="c r" style="left:739px;width:73px;letter-spacing:-0.117px;">17528</span><span class="c" style="left:812px;width:146px;"></span></div>
<div class="row" style="top:510px"><i class="rh"></i><span class="c" style="left:15px;width:165px;letter-spacing:-1.282px;">LESS</span><span class="c" style="left:180px;width:129px;letter-spacing:-0.73px;">MARIBETH</span><span class="c" style="left:309px;width:97px;"></span><span class="c" style="left:406px;width:80px;"></span><span class="c r" style="left:486px;width:80px;letter-spacing:-0.117px;">000041</span><span class="c r" style="left:566px;width:76px;letter-spacing:0.023px;">8/2/2017</span><span class="c" style="left:642px;width:97px;letter-spacing:-0.706px;">MANHEIM</span><span class="c r" style="left:739px;width:73px;letter-spacing:-0.117px;">17545</span><span class="c" style="left:812px;width:146px;"></span></div>
<div class="row" style="top:526px"><i class="rh"></i><span class="c" style="left:15px;width:165px;letter-spacing:-0.785px;">PARK</span><span class="c" style="left:180px;width:129px;letter-spacing:-1.079px;word-spacing:1.022px;">CELESTE J</span><span class="c" style="left:309px;width:97px;"></span><span class="c" style="left:406px;width:80px;"></span><span class="c r" style="left:486px;width:80px;letter-spacing:-0.117px;">000040</span><span class="c r" style="left:566px;width:76px;letter-spacing:0.023px;">8/3/2017</span><span class="c" style="left:642px;width:97px;letter-spacing:-0.815px;word-spacing:0.759px;">MT JOY</span><span class="c r" style="left:739px;width:73px;letter-spacing:-0.117px;">17522</span><span class="c" style="left:812px;width:146px;letter-spacing:-1.065px;word-spacing:1.009px;">LENNY DELEON</span></div>
<div class="row" style="top:542px"><i class="rh"></i><span class="c" style="left:15px;width:165px;letter-spacing:-0.644px;">SMITH</span><span class="c" style="left:180px;width:129px;letter-spacing:-0.812px;word-spacing:0.756px;">JOHN L</span><span class="c" style="left:309px;width:97px;letter-spacing:-0.041px;">717-555-9061</span><span class="c" style="left:406px;width:80px;"></span><span class="c r" style="left:486px;width:80px;letter-spacing:-0.117px;">000039</span><span class="c r" style="left:566px;width:76px;letter-spacing:0.007px;">7/25/2017</span><span class="c" style="left:642px;width:97px;letter-spacing:-0.742px;">WRIGHTSVILLE</span><span class="c r" style="left:739px;width:73px;letter-spacing:-0.117px;">17360</span><span class="c" style="left:812px;width:146px;letter-spacing:-1.001px;">BORDNER</span></div>
<div class="row" style="top:558px"><i class="rh"></i><span class="c" style="left:15px;width:165px;letter-spacing:-0.785px;">PARK</span><span class="c" style="left:180px;width:129px;letter-spacing:-1.073px;word-spacing:1.017px;">STEVEN J</span><span class="c" style="left:309px;width:97px;letter-spacing:-0.041px;">717-555-0357</span><span class="c" style="left:406px;width:80px;"></span><span class="c r" style="left:486px;width:80px;letter-spacing:-0.117px;">000038</span><span class="c r" style="left:566px;width:76px;letter-spacing:0.007px;">7/26/2017</span><span class="c" style="left:642px;width:97px;letter-spacing:-0.815px;word-spacing:0.759px;">MT JOY</span><span class="c r" style="left:739px;width:73px;letter-spacing:-0.117px;">17522</span><span class="c" style="left:812px;width:146px;"></span></div>
<div class="row" style="top:574px"><i class="rh"></i><span class="c" style="left:15px;width:165px;letter-spacing:-1.032px;">MEDGARD</span><span class="c" style="left:180px;width:129px;letter-spacing:-0.679px;word-spacing:0.623px;">MICHAEL R</span><span class="c" style="left:309px;width:97px;letter-spacing:-0.041px;">717-555-4533</span><span class="c" style="left:406px;width:80px;"></span><span class="c r" style="left:486px;width:80px;letter-spacing:-0.117px;">000037</span><span class="c r" style="left:566px;width:76px;letter-spacing:0.007px;">12/5/2016</span><span class="c" style="left:642px;width:97px;letter-spacing:-1.141px;">DENVER</span><span class="c r" style="left:739px;width:73px;letter-spacing:-0.117px;">17517</span><span class="c" style="left:812px;width:146px;letter-spacing:-0.826px;word-spacing:0.769px;">RICHARD MULLEN</span></div>
<div class="row" style="top:590px"><i class="rh"></i><span class="c" style="left:15px;width:165px;letter-spacing:-1.04px;">BARNEY</span><span class="c" style="left:180px;width:129px;letter-spacing:-0.601px;word-spacing:0.544px;">DIANA LEE</span><span class="c" style="left:309px;width:97px;letter-spacing:-0.041px;">717-555-0724</span><span class="c" style="left:406px;width:80px;"></span><span class="c r" style="left:486px;width:80px;letter-spacing:-0.117px;">000036</span><span class="c r" style="left:566px;width:76px;letter-spacing:0.007px;">12/5/2016</span><span class="c" style="left:642px;width:97px;letter-spacing:-0.939px;">LEBANON</span><span class="c r" style="left:739px;width:73px;letter-spacing:-0.117px;">17042</span><span class="c" style="left:812px;width:146px;letter-spacing:-1.169px;word-spacing:1.112px;">KEN REED</span></div>
<div class="row" style="top:606px"><i class="rh"></i><span class="c" style="left:15px;width:165px;letter-spacing:-0.74px;">BARTON</span><span class="c" style="left:180px;width:129px;letter-spacing:-0.623px;word-spacing:0.566px;">KARLI R</span><span class="c" style="left:309px;width:97px;letter-spacing:-0.041px;">717-555-5376</span><span class="c" style="left:406px;width:80px;"></span><span class="c r" style="left:486px;width:80px;letter-spacing:-0.117px;">000035</span><span class="c r" style="left:566px;width:76px;letter-spacing:0.007px;">12/2/2016</span><span class="c" style="left:642px;width:97px;letter-spacing:-0.939px;">LEBANON</span><span class="c r" style="left:739px;width:73px;letter-spacing:-0.117px;">17042</span><span class="c" style="left:812px;width:146px;letter-spacing:-1.001px;">BORDNER</span></div>
<div class="row" style="top:622px"><i class="rh"></i><span class="c" style="left:15px;width:165px;letter-spacing:-0.758px;">ZIMMERMAN</span><span class="c" style="left:180px;width:129px;letter-spacing:-0.853px;word-spacing:0.797px;">JOHNNY D</span><span class="c" style="left:309px;width:97px;letter-spacing:-0.041px;">717-555-1923</span><span class="c" style="left:406px;width:80px;"></span><span class="c r" style="left:486px;width:80px;letter-spacing:-0.117px;">000034</span><span class="c r" style="left:566px;width:76px;letter-spacing:0.077px;">11/18/2016</span><span class="c" style="left:642px;width:97px;letter-spacing:-0.685px;">BAINBRIDGE</span><span class="c r" style="left:739px;width:73px;letter-spacing:-0.117px;">17502</span><span class="c" style="left:812px;width:146px;letter-spacing:-1.169px;word-spacing:1.112px;">KEN REED</span></div>
<div style="left:369px;top:174px;width:128px;height:15px;border:1px dotted #d2691e"></div>
<div style="left:188px;top:636px;width:1029px;height:1px;background:#fff"></div>
<div style="left:3px;top:637px;width:1247px;height:30px;background:#f0f0f0"></div>
<!-- scrollbar -->
<div style="left:1199px;top:142px;width:17px;height:494px;background:#f0f0f0"></div>
<div style="left:1199px;top:142px;width:1px;height:494px;background:#fff"></div>
<div style="left:1200px;top:159px;width:15px;height:218px;background:#cdcdcd"></div>
<svg style="left:1199px;top:142px" width="17" height="17" viewBox="0 0 17 17"><path d="M5.2 11 L8.5 7.6 L11.8 11" stroke="#5a5a5a" stroke-width="2" fill="none"/></svg>
<svg style="left:1199px;top:619px" width="17" height="17" viewBox="0 0 17 17"><path d="M5.2 6.4 L8.5 9.8 L11.8 6.4" stroke="#5a5a5a" stroke-width="2" fill="none"/></svg>
<!-- bottom -->
<div class="t" style="left:191px;top:652px;font-size:13px;letter-spacing:-0.147px;word-spacing:0.08px;">Customer Related Deals:</div>
<div style="left:187px;top:674px;width:1027px;height:117px;background:#ababab;border-top:1px solid #a0a0a0;border-left:1px solid #a0a0a0"></div>
<div class="hdr bh" style="left:188px;width:12px;top:675px;"></div><div class="hdr bh" style="left:200px;width:67px;top:675px;letter-spacing:-0.232px;word-spacing:0.176px;text-align:right;padding-right:2px;">Deal Date</div><div class="hdr bh" style="left:267px;width:67px;top:675px;letter-spacing:-0.447px;word-spacing:0.391px;">Deal No</div><div class="hdr bh" style="left:334px;width:80px;top:675px;letter-spacing:-0.367px;word-spacing:0.311px;">Stock No</div><div class="hdr bh" style="left:414px;width:93px;top:675px;letter-spacing:-0.22px;word-spacing:0.164px;">Model Year</div><div class="hdr bh" style="left:507px;width:93px;top:675px;letter-spacing:-0.474px;word-spacing:0px;">Make</div><div class="hdr bh" style="left:600px;width:80px;top:675px;letter-spacing:-0.392px;word-spacing:0px;">Model</div><div class="hdr bh" style="left:680px;width:80px;top:675px;letter-spacing:-0.257px;word-spacing:0px;">Color</div><div class="hdr bh" style="left:760px;width:200px;top:675px;letter-spacing:-0.372px;word-spacing:0px;">Buyers</div><div class="hdr bh" style="left:960px;width:147px;top:675px;letter-spacing:-0.364px;word-spacing:0px;">Salesman</div>
<div style="left:188px;top:691px;width:920px;height:1px;background:#696969"></div>
<div style="left:1107px;top:675px;width:1px;height:17px;background:#696969"></div>
<div style="left:1214px;top:674px;width:1px;height:118px;background:#fff"></div>
<div style="left:187px;top:791px;width:1028px;height:1px;background:#fff"></div>
<!-- status -->
<div style="left:1px;top:805px;width:1251px;height:1px;background:#e3e3e3"></div>
<div style="left:1250px;top:92px;width:1px;height:714px;background:#e3e3e3"></div>
<div style="left:1251px;top:91px;width:1px;height:716px;background:#fff"></div>
<div style="left:1px;top:806px;width:1251px;height:26px;background:#f0f0f0"></div>
<div style="left:1px;top:806px;width:1251px;height:1px;background:#fff"></div>
<div style="left:1px;top:806px;width:179px;height:3px;background:#fbfbfb"></div>
<div style="left:1px;top:809px;width:179px;height:23px;border-top:1px solid #a0a0a0;border-left:1px solid #a0a0a0;border-right:1px solid #fff;border-bottom:1px solid #fff"></div>
<div class="t" style="left:70px;top:814px;font-size:13px;letter-spacing:0.397px;font-weight:bold;color:#6c6c6c;-webkit-text-stroke:0.35px #6c6c6c;">Ready</div>
<div class="t" style="left:676px;top:814px;font-size:13px;letter-spacing:0.165px;font-weight:bold;color:#000;-webkit-text-stroke:0.35px #000;">Customer</div>
<svg style="left:1236px;top:816px" width="16" height="16" viewBox="0 0 16 16"><path d="M2 15.5 L15.5 2 M7 15.5 L15.5 7 M12 15.5 L15.5 12" stroke="#a0a0a0" stroke-width="1.3" fill="none"/></svg>
<!-- window border -->
<div style="left:0;top:0;width:1253px;height:1px;background:#e1a244"></div>
<div style="left:0;top:0;width:1px;height:833px;background:#e1a244"></div>
<div style="left:1252px;top:0;width:1px;height:833px;background:#e1a244"></div>
<div style="left:0;top:832px;width:1253px;height:1px;background:#e1a244"></div>
</div></body></html>
